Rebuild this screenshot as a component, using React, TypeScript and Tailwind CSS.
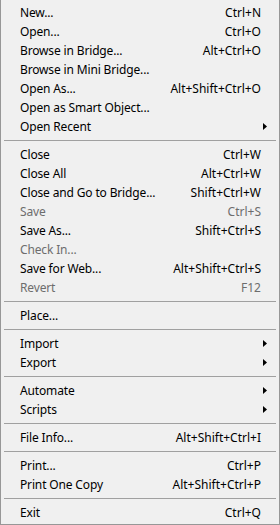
type Item = { label: string; shortcut?: string; disabled?: boolean; submenu?: boolean } | "sep";

const items: Item[] = [
  { label: "New...", shortcut: "Ctrl+N" },
  { label: "Open...", shortcut: "Ctrl+O" },
  { label: "Browse in Bridge...", shortcut: "Alt+Ctrl+O" },
  { label: "Browse in Mini Bridge..." },
  { label: "Open As...", shortcut: "Alt+Shift+Ctrl+O" },
  { label: "Open as Smart Object..." },
  { label: "Open Recent", submenu: true },
  "sep",
  { label: "Close", shortcut: "Ctrl+W" },
  { label: "Close All", shortcut: "Alt+Ctrl+W" },
  { label: "Close and Go to Bridge...", shortcut: "Shift+Ctrl+W" },
  { label: "Save", shortcut: "Ctrl+S", disabled: true },
  { label: "Save As...", shortcut: "Shift+Ctrl+S" },
  { label: "Check In...", disabled: true },
  { label: "Save for Web...", shortcut: "Alt+Shift+Ctrl+S" },
  { label: "Revert", shortcut: "F12", disabled: true },
  "sep",
  { label: "Place..." },
  "sep",
  { label: "Import", submenu: true },
  { label: "Export", submenu: true },
  "sep",
  { label: "Automate", submenu: true },
  { label: "Scripts", submenu: true },
  "sep",
  { label: "File Info...", shortcut: "Alt+Shift+Ctrl+I" },
  "sep",
  { label: "Print...", shortcut: "Ctrl+P" },
  { label: "Print One Copy", shortcut: "Alt+Shift+Ctrl+P" },
  "sep",
  { label: "Exit", shortcut: "Ctrl+Q" },
];

function Arrow() {
  return (
    <svg width="5" height="7" viewBox="0 0 5 7" className="block">
      <path d="M0 0 L4 3.5 L0 7 Z" fill="#000" />
    </svg>
  );
}

export default function App() {
  return (
    <div
      className="w-[280px] h-[525px] bg-[#f0f0f0] border-l border-r border-b border-[#979797] pt-[3px] text-[12px] text-[#000] overflow-hidden"
      style={{ fontFamily: '"Noto Sans", "Liberation Sans", sans-serif' }}
    >
      {items.map((item, i) =>
        item === "sep" ? (
          <div key={i} className="h-[9px] flex items-center px-[3px]">
            <div className="h-px w-full bg-[#a0a0a0]" />
          </div>
        ) : (
          <div
            key={i}
            className={`h-[19px] flex items-center pl-[19px] pr-[18px] leading-none ${
              item.disabled ? "text-[#6d6d6d]" : ""
            }`}
          >
            <span className="flex-1 whitespace-nowrap tracking-[-0.15px]">{item.label}</span>
            {item.shortcut && <span className="whitespace-nowrap">{item.shortcut}</span>}
            {item.submenu && (
              <span className="mr-[-7px]">
                <Arrow />
              </span>
            )}
          </div>
        )
      )}
    </div>
  );
}
